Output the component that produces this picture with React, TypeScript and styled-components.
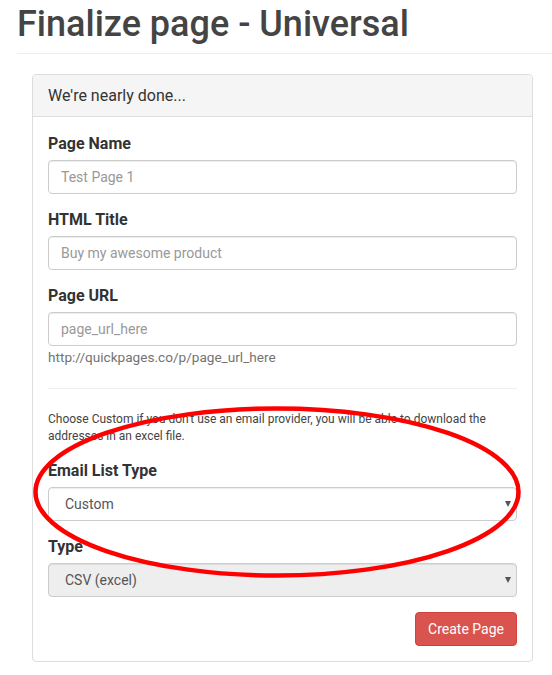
import React from 'react';
import styled, {createGlobalStyle} from 'styled-components';

const GlobalStyle = createGlobalStyle`
  html, body {
    margin: 0;
    padding: 0;
    background: #ffffff;
  }
  body {
    font-family: 'Roboto', 'Liberation Sans', sans-serif;
    color: #333333;
    font-size: 14px;
  }
  * {
    box-sizing: border-box;
  }
`;

const App = () => {
  return (
    <Page>
      <GlobalStyle />
      <TitleBar>
        <Title>Finalize page - Universal</Title>
      </TitleBar>
      <Panel>
        <PanelHeading>We're nearly done...</PanelHeading>
        <PanelBody>
          <FormGroup>
            <Label>Page Name</Label>
            <TextInput placeholder='Test Page 1' />
          </FormGroup>
          <FormGroup>
            <Label>HTML Title</Label>
            <TextInput placeholder='Buy my awesome product' />
          </FormGroup>
          <FormGroup last>
            <Label>Page URL</Label>
            <TextInput placeholder='page_url_here' />
            <UrlHelp>http://quickpages.co/p/page_url_here</UrlHelp>
          </FormGroup>
          <Divider />
          <Note>
            Choose Custom if you don't use an email provider, you will be able to download the
            addresses in an excel file.
          </Note>
          <FormGroup>
            <Label>Email List Type</Label>
            <SelectWrap>
              <Select defaultValue='custom'>
                <option value='custom'>Custom</option>
                <option value='mailchimp'>MailChimp</option>
              </Select>
            </SelectWrap>
          </FormGroup>
          <FormGroup>
            <Label>Type</Label>
            <SelectWrap>
              <Select disabled defaultValue='csv'>
                <option value='csv'>CSV (excel)</option>
              </Select>
            </SelectWrap>
          </FormGroup>
          <Actions>
            <DangerButton>Create Page</DangerButton>
          </Actions>
        </PanelBody>
      </Panel>
      <Annotation width='490' height='178' viewBox='0 0 490 178'>
        <ellipse
          cx='244'
          cy='88'
          rx='241.5'
          ry='83.5'
          fill='none'
          stroke='#ff0000'
          strokeWidth='4.5'
        />
      </Annotation>
    </Page>
  );
};

const Page = styled.div`
  position: relative;
  width: 552px;
  min-height: 675px;
  padding: 5px 0 0 17px;
  overflow: hidden;
`;

const TitleBar = styled.div`
  padding-bottom: 8px;
  border-bottom: 1px solid #eeeeee;
  margin-right: -20px;
`;

const Title = styled.h1`
  margin: 0;
  font-size: 36px;
  line-height: 1.1;
  font-weight: 500;
  color: #444444;
`;

const Panel = styled.div`
  margin: 20px 0 0 15px;
  width: 501px;
  border: 1px solid #dddddd;
  border-radius: 4px;
  background: #ffffff;
`;

const PanelHeading = styled.div`
  padding: 10px 15px;
  font-size: 16px;
  line-height: 21px;
  color: #333333;
  background: #f5f5f5;
  border-bottom: 1px solid #dddddd;
  border-radius: 3px 3px 0 0;
`;

const PanelBody = styled.div`
  padding: 16px 15px 15px;
`;

const FormGroup = styled.div<{last?: boolean}>`
  margin-bottom: ${(props) => (props.last ? '0' : '15px')};
`;

const Label = styled.label`
  display: block;
  margin-bottom: 5px;
  font-size: 16px;
  line-height: 22px;
  font-weight: 700;
  color: #333333;
`;

const TextInput = styled.input`
  display: block;
  width: 100%;
  height: 34px;
  padding: 6px 12px;
  font-family: inherit;
  font-size: 14px;
  color: #555555;
  background: #ffffff;
  border: 1px solid #cccccc;
  border-radius: 4px;
  box-shadow: inset 0 1px 1px rgba(0, 0, 0, 0.075);
  outline: none;

  &::placeholder {
    color: #999999;
  }
`;

const UrlHelp = styled.div`
  margin-top: 1px;
  font-size: 13.6px;
  line-height: 20px;
  color: #737373;
`;

const Divider = styled.hr`
  margin: 21px 0 22px;
  border: 0;
  border-top: 1px solid #eeeeee;
`;

const Note = styled.p`
  margin: 0 0 15px;
  font-size: 12px;
  line-height: 17px;
  color: #444444;
`;

const SelectWrap = styled.div`
  position: relative;

  &::after {
    content: '';
    position: absolute;
    right: 6px;
    top: 14px;
    border-left: 3.5px solid transparent;
    border-right: 3.5px solid transparent;
    border-top: 6px solid #555555;
    pointer-events: none;
  }
`;

const Select = styled.select`
  display: block;
  width: 100%;
  height: 34px;
  padding: 6px 12px 6px 16px;
  font-family: inherit;
  font-size: 14px;
  color: #555555;
  background: #ffffff;
  border: 1px solid #cccccc;
  border-radius: 4px;
  box-shadow: inset 0 1px 1px rgba(0, 0, 0, 0.075);
  appearance: none;
  outline: none;

  &:disabled {
    background: #eeeeee;
    color: #555555;
    opacity: 1;
  }
`;

const Actions = styled.div`
  display: flex;
  justify-content: flex-end;
  margin-top: 15px;
`;

const DangerButton = styled.button`
  height: 34px;
  padding: 6px 12px;
  font-family: inherit;
  font-size: 14px;
  line-height: 20px;
  color: #ffffff;
  background: #d9534f;
  border: 1px solid #d43f3a;
  border-radius: 4px;
  cursor: pointer;
`;

const Annotation = styled.svg`
  position: absolute;
  left: 33px;
  top: 404px;
  pointer-events: none;
  overflow: visible;
`;

export default App;
